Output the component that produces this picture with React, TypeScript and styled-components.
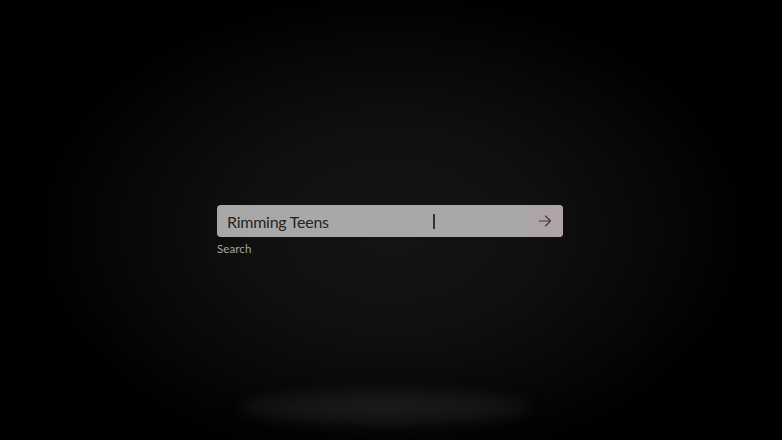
import React from "react";
import styled, { createGlobalStyle } from "styled-components";

const GlobalStyle = createGlobalStyle`
  html, body {
    margin: 0;
    padding: 0;
    background: #000;
  }
  #root {
    width: 782px;
    height: 440px;
  }
`;

const Screen = styled.div`
  position: relative;
  width: 782px;
  height: 440px;
  overflow: hidden;
  background: radial-gradient(
    ellipse 360px 240px at 391px 230px,
    #141414 0%,
    #101010 40%,
    #070707 75%,
    #000 100%
  );
  font-family: Lato, "Open Sans", sans-serif;
  display: flex;
  flex-direction: column;
  align-items: center;
  padding-top: 205px;
  padding-right: 2px;
  box-sizing: border-box;
`;

const FloorGlow = styled.div`
  position: absolute;
  left: 240px;
  top: 388px;
  width: 292px;
  height: 38px;
  border-radius: 50%;
  background: radial-gradient(ellipse at center, #1b1b1b 0%, #141414 50%, rgba(8, 8, 8, 0) 100%);
  filter: blur(6px);
`;

const SearchBlock = styled.div`
  width: 346px;
  display: flex;
  flex-direction: column;
  gap: 5px;
`;

const Bar = styled.form`
  height: 32px;
  display: flex;
  border-radius: 4px;
  overflow: hidden;
  background: #a8a8a8;
`;

const Field = styled.div`
  flex: 1;
  position: relative;
  display: flex;
  align-items: center;
  padding-left: 10px;
  font-size: 16px;
  color: #242424;
  letter-spacing: -0.25px;
`;

const Caret = styled.span`
  position: absolute;
  left: 216px;
  top: 9px;
  width: 1.5px;
  height: 15px;
  background: #333;
`;

const Submit = styled.button`
  width: 34px;
  border: none;
  padding: 0 3px 0 0;
  background: #b0a3a6;
  display: flex;
  align-items: center;
  justify-content: center;
  cursor: pointer;
`;

const Label = styled.span`
  font-size: 11.5px;
  color: #a6a6a6;
  letter-spacing: 0.1px;
`;

function App() {
  return (
    <>
      <GlobalStyle />
      <Screen>
        <SearchBlock>
          <Bar onSubmit={(e) => e.preventDefault()}>
            <Field>
              Rimming Teens
              <Caret />
            </Field>
            <Submit type="submit" aria-label="Search">
              <svg width="14" height="14" viewBox="0 0 14 14" fill="none" stroke="#3a3a3a" strokeWidth="1.2" strokeLinecap="round" strokeLinejoin="round">
                <path d="M1.5 7h11M7.5 2l5 5-5 5" />
              </svg>
            </Submit>
          </Bar>
          <Label>Search</Label>
        </SearchBlock>
        <FloorGlow />
      </Screen>
    </>
  );
}

export default App;
